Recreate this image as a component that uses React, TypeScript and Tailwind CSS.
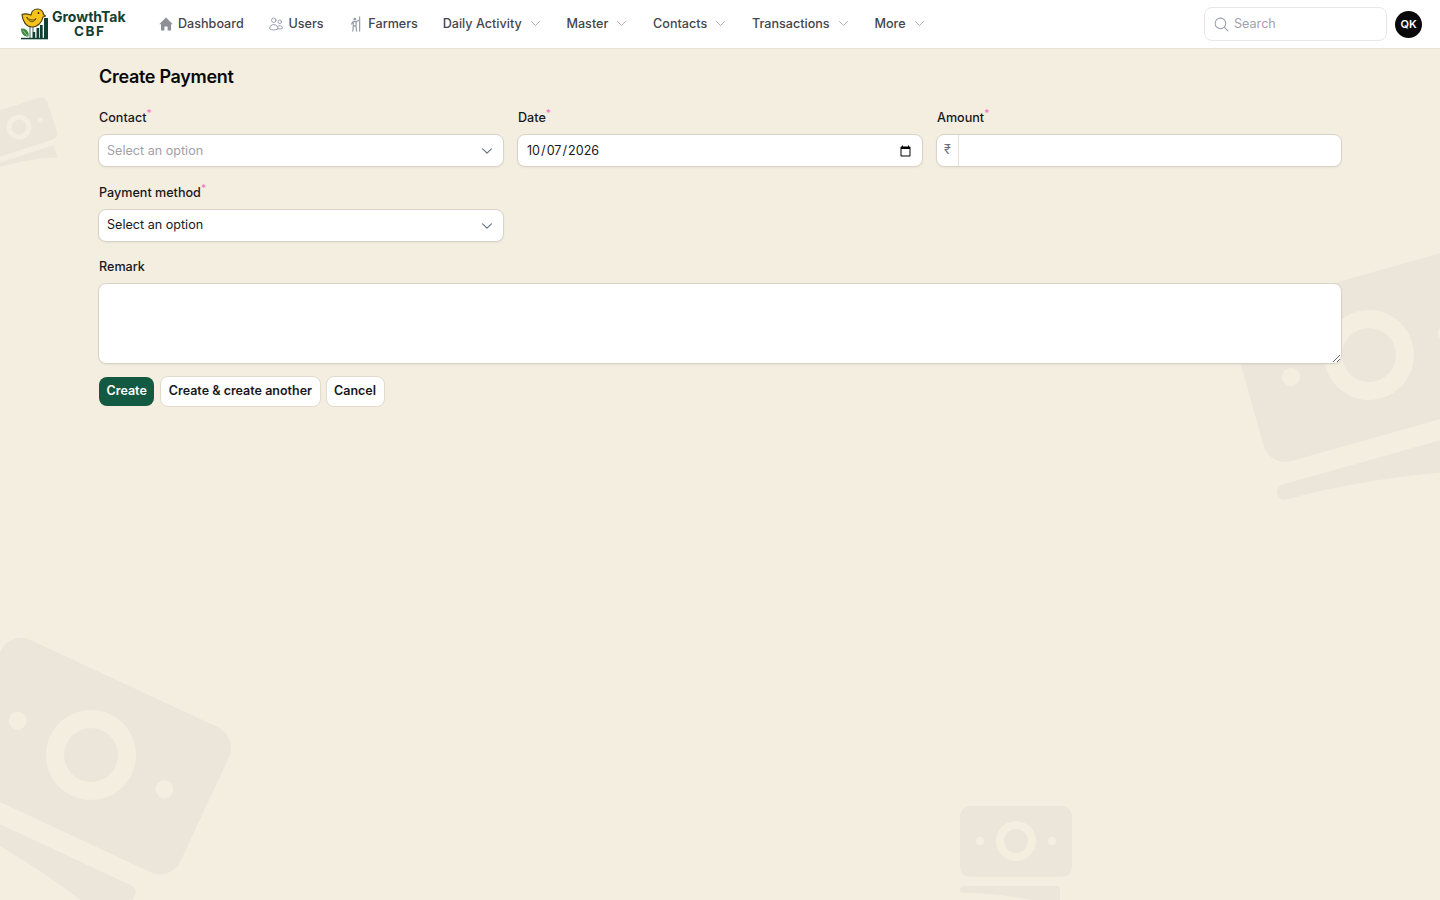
import type { ReactNode } from 'react';
import { HiOutlineUsers, HiOutlineChevronDown, HiOutlineMagnifyingGlass } from 'react-icons/hi2';

const BILL_BG = '#f4eee1';

function Bill({ x, y, angle, scale }: { x: number; y: number; angle: number; scale: number }) {
  return (
    <g transform={`translate(${x} ${y}) rotate(${angle}) scale(${scale})`}>
      <rect x={-56} y={-35} width={112} height={71} rx={10} fill="#ece5d9" />
      <circle r={20} fill={BILL_BG} />
      <circle r={12} fill="#ece5d9" />
      <circle cx={-36} r={4} fill={BILL_BG} />
      <circle cx={36} r={4} fill={BILL_BG} />
      <path d="M-52.5 45H41a3 3 0 0 1 3 3V66C20 58-20 52-52.5 52a3.5 3.5 0 0 1 0-7Z" fill="#ece5d9" />
    </g>
  );
}

function HomeIcon() {
  return (
    <svg width="16" height="16" viewBox="0 0 16 16" fill="#8e8e96">
      <path d="M8 1.500 1.200 8.200H3v6.300h3.400V10.500h3.200v4H13V8.200h1.800Z" />
    </svg>
  );
}

function FarmerIcon() {
  return (
    <svg width="16" height="16" viewBox="0 0 16 16" fill="none" stroke="#9ca3af" strokeWidth="1.3" strokeLinecap="round" strokeLinejoin="round">
      <circle cx="6.800" cy="3.200" r="1.400" fill="#9ca3af" stroke="none" />
      <path d="M5 5.600h3.400l2.600-1.400M5 5.600 3.600 8M5.200 5.800 5.300 10 4.800 15M8.200 5.800 8 10 8.600 15M5.400 10H8" />
      <path d="M11.600 1v14" />
    </svg>
  );
}

function Logo() {
  return (
    <svg width="30" height="32" viewBox="0 0 30 32" className="shrink-0">
      <path d="M3 6.500C6 5 9 6 12 7 12.500 3.500 15 1 18.500 1 22 1 24.500 3.500 24.500 6.500L26.500 8 24 9C23 14 19 19 13 19 7 19 3.500 13 3 6.500Z" fill="#f6c21c" stroke="#4a4210" strokeWidth="1.200" strokeLinejoin="round" />
      <path d="M7.500 9C10 12 14 13 17 10.500 15.500 15 10 15 7.500 9Z" fill="#e0a810" stroke="#4a4210" strokeWidth="0.800" strokeLinejoin="round" />
      <circle cx="19.500" cy="5" r="0.900" fill="#222" />
      <path d="M11 19v11M14 19v5" stroke="#123f33" strokeWidth="0.800" />
      <rect x="13.500" y="24" width="2.700" height="6.500" fill="#123f33" />
      <rect x="17.500" y="20" width="2.700" height="10.500" fill="#123f33" />
      <rect x="21" y="17" width="2.700" height="13.500" fill="#123f33" />
      <rect x="25" y="10" width="4" height="20.500" fill="#123f33" />
      <rect x="2" y="29.800" width="27" height="1.500" fill="#123f33" />
      <path d="M2 20.500c3.500-.6 6.500 1 7.500 4.500.3 1.500.1 2.800.1 3.500C5.500 29 2.100 26.500 2 20.500Z" fill="#3c8a3f" />
      <path d="M4 22.500 8.500 28" stroke="#d8ecd0" strokeWidth="0.600" />
    </svg>
  );
}

function NavItem({ icon, label, menu }: { icon?: ReactNode; label: string; menu?: boolean }) {
  return (
    <div className="flex items-center">
      {icon && <span className="mr-1 flex w-4 justify-center text-gray-400">{icon}</span>}
      <span className="text-[12.6px] font-medium text-[#45454d]">{label}</span>
      {menu && <HiOutlineChevronDown className="ml-[7px] text-gray-400" size={13} />}
    </div>
  );
}

function Label({ text, required }: { text: string; required?: boolean }) {
  return (
    <div className="mb-[7px] h-5 pt-px pl-px text-[12.6px] leading-5 font-medium text-[#18181b]">
      {text}
      {required && <sup className="text-[10px] font-medium text-[#f177c0]">*</sup>}
    </div>
  );
}

function FakeSelect({ placeholder }: { placeholder?: boolean }) {
  return (
    <div className="flex h-[33px] items-center justify-between rounded-lg border border-[#d8d3c7] bg-white pr-[9px] pl-2 shadow-xs">
      <span className={`text-[12.6px] ${placeholder ? 'pt-px text-[#a1a1aa]' : 'text-[#18181b]'}`}>Select an option</span>
      <HiOutlineChevronDown className="text-gray-500" size={14} strokeWidth={2} />
    </div>
  );
}

export default function App() {
  return (
    <div className="relative h-[900px] overflow-hidden bg-[#f4eee1] font-['Inter',sans-serif]">
      <svg width="1440" height="900" viewBox="0 0 1440 900" className="pointer-events-none absolute inset-0">
        <Bill x={91} y={755} angle={25} scale={2.25} />
        <Bill x={1369} y={355} angle={-15.7} scale={2.25} />
        <Bill x={1016} y={841} angle={0} scale={1} />
        <Bill x={19} y={127} angle={-18} scale={0.62} />
      </svg>

      <header className="relative flex h-[49px] items-center border-b border-[#e8e3d5] bg-white pr-[18px] pl-[19px]">
        <div className="flex w-[108px] items-center">
          <Logo />
          <div className="ml-[3px] flex flex-col items-center text-[#123f33]">
            <span className="text-[14px] leading-[15px] font-bold">GrowthTak</span>
            <span className="pl-[2px] text-[13.5px] leading-[15px] font-bold tracking-[0.12em]">CBF</span>
          </div>
        </div>
        <nav className="ml-[31px] flex items-center gap-[24.75px]">
          <NavItem icon={<HomeIcon />} label="Dashboard" />
          <NavItem icon={<HiOutlineUsers size={16} />} label="Users" />
          <NavItem icon={<FarmerIcon />} label="Farmers" />
          <NavItem label="Daily Activity" menu />
          <NavItem label="Master" menu />
          <NavItem label="Contacts" menu />
          <NavItem label="Transactions" menu />
          <NavItem label="More" menu />
        </nav>
        <div className="ml-auto flex items-center gap-2">
          <div className="flex h-[34px] w-[183px] items-center gap-[4px] rounded-lg border border-gray-200 bg-white pl-[8px]">
            <HiOutlineMagnifyingGlass className="text-gray-400" size={17} />
            <span className="text-[12.6px] text-[#a1a1aa]">Search</span>
          </div>
          <div className="flex h-[27px] w-[27px] items-center justify-center rounded-full bg-[#09090b] text-[11px] font-semibold text-white">QK</div>
        </div>
      </header>

      <main className="relative pt-[14px] pr-[98.5px] pl-[98px]">
        <h1 className="mb-4 h-7 pl-px text-lg leading-7 font-semibold tracking-[-0.017em] text-[#09090b]">Create Payment</h1>

        <div className="grid grid-cols-3 gap-x-[13.5px] gap-y-[15px]">
          <div>
            <Label text="Contact" required />
            <FakeSelect placeholder />
          </div>
          <div>
            <Label text="Date" required />
            <input
              type="date"
              defaultValue="2026-10-07"
              className="h-[33px] w-full rounded-lg border border-[#d8d3c7] bg-white px-2 pt-px text-[12.6px] text-[#18181b] shadow-xs outline-none"
            />
          </div>
          <div>
            <Label text="Amount" required />
            <div className="flex h-[33px] overflow-hidden rounded-lg border border-[#d8d3c7] bg-white shadow-xs">
              <span className="flex w-[22px] items-center justify-center border-r border-[#e5e1d6] text-[12.6px] text-gray-500">₹</span>
              <input type="text" className="flex-1 px-2 text-[12.6px] outline-none" />
            </div>
          </div>
          <div>
            <Label text="Payment method" required />
            <FakeSelect />
          </div>
          <div className="col-span-3">
            <div className="-mt-[1px]">
              <Label text="Remark" />
            </div>
            <textarea className="block h-[81px] w-full rounded-lg border border-[#d8d3c7] bg-white px-2 py-1 text-[12.6px] shadow-xs outline-none" />
          </div>
        </div>

        <div className="mt-[12px] flex items-center gap-[5px] pl-px">
          <button type="button" className="h-[29px] rounded-lg bg-[#135a43] px-[7.5px] text-[12.5px] font-semibold text-white">Create</button>
          <button type="button" className="ml-px h-[31px] rounded-lg border border-[#e0dbcd] bg-white px-[7.5px] text-[12.5px] font-semibold text-[#18181b]">Create &amp; create another</button>
          <button type="button" className="h-[31px] rounded-lg border border-[#e0dbcd] bg-white px-[7.5px] text-[12.5px] font-semibold text-[#18181b]">Cancel</button>
        </div>
      </main>
    </div>
  );
}
